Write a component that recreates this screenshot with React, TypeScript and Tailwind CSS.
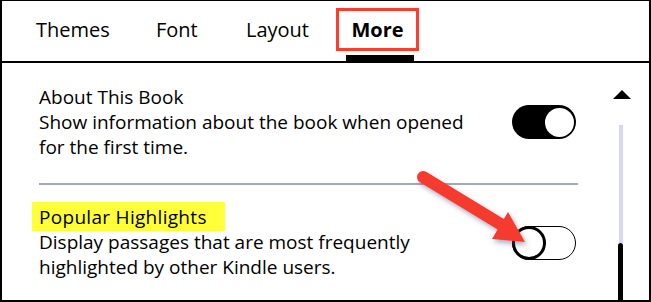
import React from "react";

function Toggle({ on }: { on: boolean }) {
  if (on) {
    return (
      <div className="w-[64px] h-[34px] rounded-full bg-black flex items-center justify-end pr-[2px]">
        <div className="w-[29px] h-[29px] rounded-full bg-white" />
      </div>
    );
  }
  return (
    <div className="relative w-[64px] h-[34px] rounded-full border border-black bg-white">
      <div className="absolute left-[-1px] top-[-1px] w-[34px] h-[34px] rounded-full border-[3px] border-black bg-white" />
    </div>
  );
}

export default function App() {
  const font = { fontFamily: "'Open Sans', 'Noto Sans', sans-serif" };
  return (
    <div
      className="relative w-[651px] h-[302px] bg-white border-l-2 border-t border-r-2 border-b-2 border-black overflow-hidden text-black"
      style={font}
    >
      {/* Tab bar */}
      <div className="h-[62px] border-b-2 border-black flex items-start pl-[34px]">
        <div className="w-[120px] pt-[15px] text-[20px] leading-[28px]">Themes</div>
        <div className="w-[90px] pt-[15px] text-[20px] leading-[28px]">Font</div>
        <div className="w-[90px] pt-[15px] text-[20px] leading-[28px]">Layout</div>
        <div className="relative w-[83px] h-[60px]">
          <div className="mt-[7px] w-[83px] h-[43px] border-[3px] border-[#ff3a30] pt-[5px] text-center text-[20px] leading-[28px] font-bold">
            More
          </div>
          <div className="absolute bottom-0 left-[10px] w-[68px] h-[6px] bg-black" />
        </div>
      </div>

      {/* Content */}
      <div className="flex">
        <div className="pl-[37px] w-[576px]">
          <div className="pt-[22px] flex items-start justify-between">
            <div className="text-[19px] leading-[25px]">
              <div>About This Book</div>
              <div>Show information about the book when opened</div>
              <div>for the first time.</div>
            </div>
            <div className="mt-[20px] mr-[2px]">
              <Toggle on />
            </div>
          </div>
          <div className="mt-[23px] h-[2px] bg-[#a4a7bd]" />
          <div className="pt-[20px] flex items-start justify-between">
            <div className="text-[19px] leading-[25px]">
              <div>
                <span className="-ml-[7px] bg-[#ffff3a] pl-[7px] pr-[18px] pt-[2px] pb-[1px] tracking-[0.3px]">
                  Popular Highlights
                </span>
              </div>
              <div>Display passages that are most frequently</div>
              <div>highlighted by other Kindle users.</div>
            </div>
            <div className="mt-[21px] mr-[2px]">
              <Toggle on={false} />
            </div>
          </div>
        </div>
        <div className="flex-1 flex flex-col items-start pt-[27px]">
          <svg width="18" height="9" viewBox="0 0 18 9" className="ml-[35px]">
            <polygon points="9,0 18,9 0,9" fill="black" />
          </svg>
          <div className="mt-[26px] ml-[41px] w-[4px] h-[118px] bg-[#d7d7f5]" />
          <div className="ml-[40px] w-[5px] h-[60px] bg-black rounded-t-full" />
        </div>
      </div>

      {/* Arrow annotation */}
      <svg
        className="absolute left-0 top-0 pointer-events-none"
        width="651"
        height="302"
        viewBox="0 0 651 302"
      >
        <defs>
          <filter id="sh" x="-20%" y="-20%" width="140%" height="140%">
            <feDropShadow dx="2" dy="3" stdDeviation="2.5" floodColor="#5a5a80" floodOpacity="0.5" />
          </filter>
        </defs>
        <g filter="url(#sh)">
          <line x1="421" y1="176" x2="500" y2="224" stroke="#f53b2f" strokeWidth="12" strokeLinecap="round" />
          <polygon points="506,211 523,241 490,238" fill="#f53b2f" />
        </g>
      </svg>
    </div>
  );
}
